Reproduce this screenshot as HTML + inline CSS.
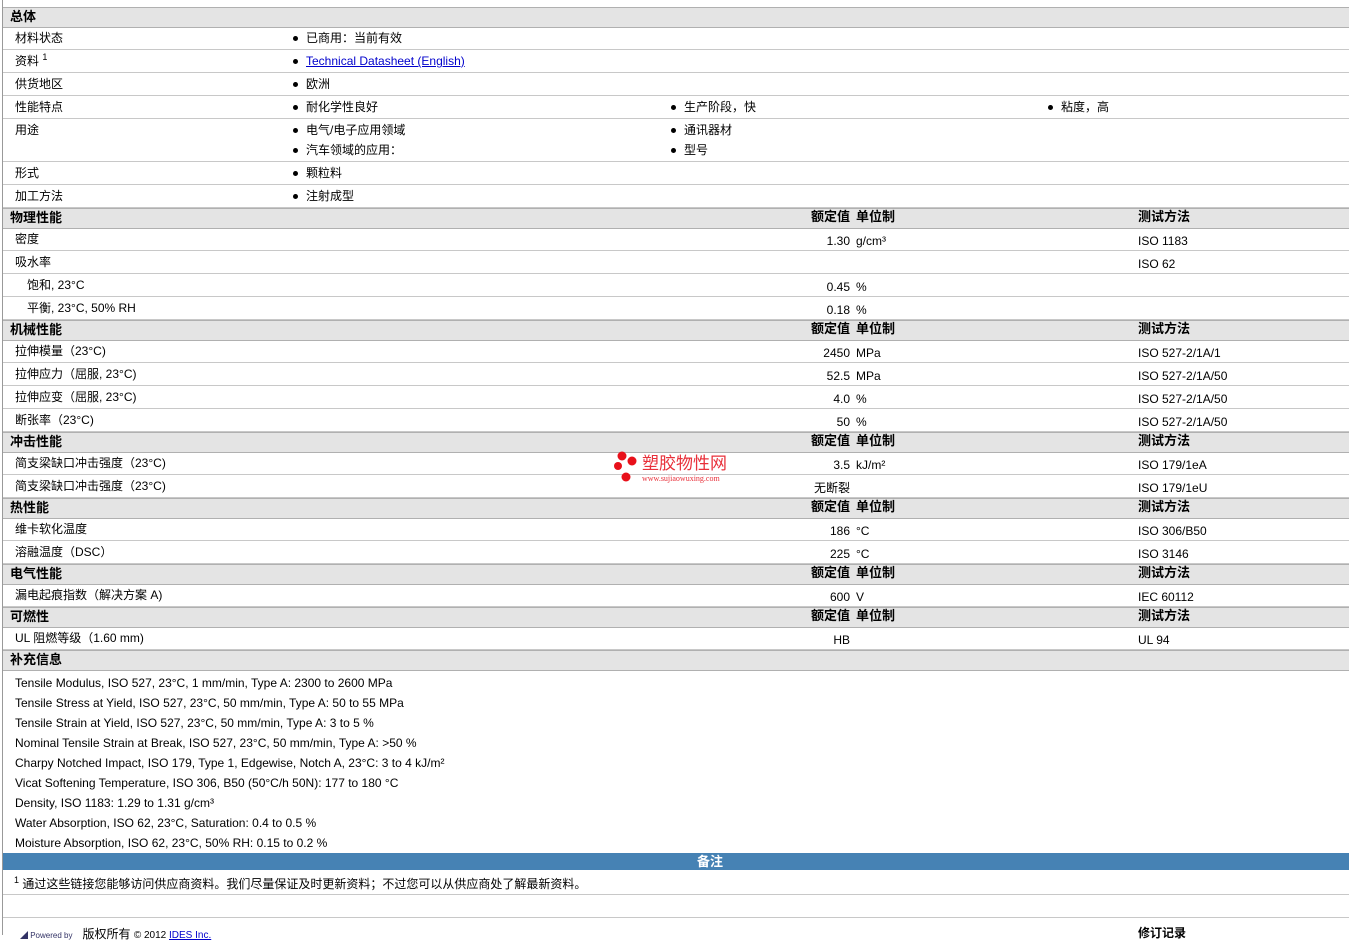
<!DOCTYPE html>
<html><head><meta charset="utf-8"><style>
body{margin:0;width:1349px;height:935px;overflow:hidden;background:#fff;font-family:"Liberation Sans","Noto Sans CJK SC",sans-serif;font-size:12px;color:#000;position:relative}
.vl{position:absolute;left:2px;top:0;width:1px;height:935px;background:#999}
.r{position:absolute;left:3px;right:0;border-bottom:1px solid #c8c8c8;box-sizing:border-box}
.h{background:#e4e4e4;border-top:1px solid #b0b0b0;border-bottom:1px solid #b0b0b0;font-weight:bold;font-size:13px}
.t{position:absolute;white-space:nowrap;line-height:14px}
.b::before{content:"";position:absolute;left:-13px;top:5px;width:5px;height:5px;border-radius:50%;background:#000}
a{color:#00c}
</style></head><body>
<div class="vl"></div>
<div id="c"></div>
<script>
var c=document.getElementById('c'),H='';
function row(y,h,cls){H+='<div class="r '+(cls||'')+'" style="top:'+y+'px;height:'+h+'px"></div>';}
function t(x,y,s,st){H+='<div class="t" style="left:'+x+'px;top:'+y+'px;'+(st||'')+'">'+s+'</div>';}
function tr(x,y,s,st){H+='<div class="t" style="right:'+(1349-x)+'px;top:'+y+'px;'+(st||'')+'">'+s+'</div>';}
function bl(x,y,s){H+='<div class="t b" style="left:'+x+'px;top:'+y+'px">'+s+'</div>';}
function hd(y,name,cols){row(y,21,'h');var s='font-weight:bold;font-size:13px';t(10,y+3,name,s);if(cols){tr(850,y+2,'额定值',s);t(856,y+2,'单位制',s);t(1138,y+2,'测试方法',s);}}
hd(7,'总体');
var g=[[27,23,'材料状态',[[306,'已商用：当前有效']]],[50,23,'资料 <sup style="font-size:9px;line-height:0">1</sup>',[[306,'<a href="#">Technical Datasheet (English)</a>']]],[73,23,'供货地区',[[306,'欧洲']]],[96,23,'性能特点',[[306,'耐化学性良好'],[684,'生产阶段，快'],[1061,'粘度，高']]],[119,43,'用途',[[306,'电气/电子应用领域'],[684,'通讯器材']]],[162,23,'形式',[[306,'颗粒料']]],[185,23,'加工方法',[[306,'注射成型']]]];
g.forEach(function(r){row(r[0],r[1]);t(15,r[0]+4,r[2]);r[3].forEach(function(b){bl(b[0],r[0]+4,b[1]);});});
bl(306,143,'汽车领域的应用：');bl(684,143,'型号');
function dr(y,l,v,u,m,ind){row(y,23);t(ind?27:15,y+4,l);if(v)tr(850,y+6,v);if(u)t(856,y+6,u);if(m)t(1138,y+6,m);}
hd(208,'物理性能',1);
dr(228,'密度','1.30','g/cm³','ISO 1183');dr(251,'吸水率','','','ISO 62');dr(274,'饱和, 23°C','0.45','%','',1);dr(297,'平衡, 23°C, 50% RH','0.18','%','',1);
hd(320,'机械性能',1);
dr(340,'拉伸模量（23°C)','2450','MPa','ISO 527-2/1A/1');dr(363,'拉伸应力（屈服, 23°C)','52.5','MPa','ISO 527-2/1A/50');dr(386,'拉伸应变（屈服, 23°C)','4.0','%','ISO 527-2/1A/50');dr(409,'断张率（23°C)','50','%','ISO 527-2/1A/50');
hd(432,'冲击性能',1);
dr(452,'简支梁缺口冲击强度（23°C)','3.5','kJ/m²','ISO 179/1eA');dr(475,'简支梁缺口冲击强度（23°C)','无断裂','','ISO 179/1eU');
hd(498,'热性能',1);
dr(518,'维卡软化温度','186','°C','ISO 306/B50');dr(541,'溶融温度（DSC）','225','°C','ISO 3146');
hd(564,'电气性能',1);dr(584,'漏电起痕指数（解决方案 A)','600','V','IEC 60112');
hd(607,'可燃性',1);dr(627,'UL 阻燃等级（1.60 mm)','HB','','UL 94');
hd(650,'补充信息');
['Tensile Modulus, ISO 527, 23°C, 1 mm/min, Type A: 2300 to 2600 MPa','Tensile Stress at Yield, ISO 527, 23°C, 50 mm/min, Type A: 50 to 55 MPa','Tensile Strain at Yield, ISO 527, 23°C, 50 mm/min, Type A: 3 to 5 %','Nominal Tensile Strain at Break, ISO 527, 23°C, 50 mm/min, Type A: &gt;50 %','Charpy Notched Impact, ISO 179, Type 1, Edgewise, Notch A, 23°C: 3 to 4 kJ/m²','Vicat Softening Temperature, ISO 306, B50 (50°C/h 50N): 177 to 180 °C','Density, ISO 1183: 1.29 to 1.31 g/cm³','Water Absorption, ISO 62, 23°C, Saturation: 0.4 to 0.5 %','Moisture Absorption, ISO 62, 23°C, 50% RH: 0.15 to 0.2 %'].forEach(function(s,i){t(15,676+i*20,s);});
H+='<div style="position:absolute;left:3px;right:0;top:853px;height:17px;background:#4682b4;color:#fff;font-weight:bold;font-size:13px;text-align:center;line-height:17px;padding-left:68px;box-sizing:border-box">备注</div>';
row(870,25);t(14,877,'<sup style="font-size:9px;line-height:0">1</sup> 通过这些链接您能够访问供应商资料。我们尽量保证及时更新资料；不过您可以从供应商处了解最新资料。');
row(895,23);
t(20,927,'<span style="font-size:8px;color:#336">◢ Powered by</span>&nbsp;&nbsp; 版权所有 <span style="font-size:10px">© 2012 <a href="#">IDES Inc.</a></span>');
t(1138,926,'修订记录','font-weight:bold');
H+='<div class="t" style="left:612px;top:450px"><svg width="30" height="34"><circle cx="10" cy="6" r="4.5" fill="#e8101a"/><circle cx="20" cy="11" r="4.5" fill="#e8101a"/><circle cx="6" cy="16" r="4" fill="#e8101a"/><circle cx="14" cy="27" r="4.5" fill="#e8101a"/></svg></div>';
t(642,455,'塑胶物性网','color:#e8303a;font-size:17px;line-height:18px');t(642,474,'www.sujiaowuxing.com','color:#e8303a;font-size:8px;font-family:Liberation Serif,serif;line-height:9px');
c.innerHTML=H;
</script>
</body></html>
